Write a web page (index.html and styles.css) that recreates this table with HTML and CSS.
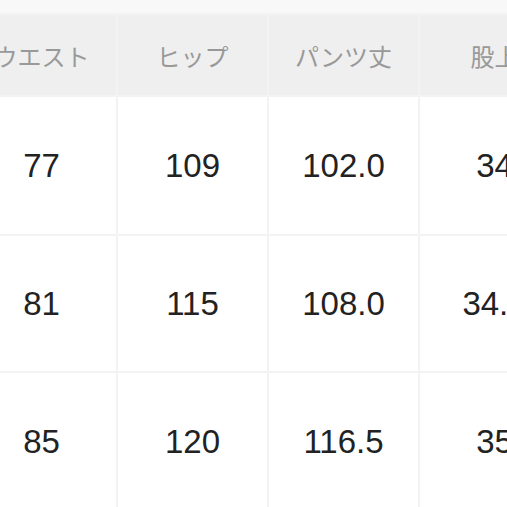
FILE: index.html
```html
<!DOCTYPE html>
<html lang="ja">
<head>
<meta charset="utf-8">
<link rel="stylesheet" href="styles.css">
</head>
<body>
<div class="wrap">
<table class="size">
<thead>
<tr><th>ウエスト</th><th>ヒップ</th><th>パンツ丈</th><th>股上</th></tr>
</thead>
<tbody>
<tr class="r1"><td>77</td><td>109</td><td>102.0</td><td>34</td></tr>
<tr class="r2"><td>81</td><td>115</td><td>108.0</td><td>34.5</td></tr>
<tr class="r3"><td>85</td><td>120</td><td>116.5</td><td>35</td></tr>
</tbody>
</table>
</div>
</body>
</html>
```
FILE: styles.css
```css
html, body {
  margin: 0;
  padding: 0;
  background: #f8f8f8;
  overflow: hidden;
}
.wrap {
  width: 507px;
  height: 507px;
  overflow: hidden;
  padding-top: 13px;
  box-sizing: border-box;
}
.size {
  width: 604px;
  border-collapse: collapse;
  table-layout: fixed;
  margin-left: -35px;
  font-family: "Noto Sans CJK JP", "Noto Sans", sans-serif;
}
.size th, .size td {
  width: 149px;
  border: 2px solid #f3f3f3;
  text-align: center;
  vertical-align: middle;
  padding: 0;
  white-space: nowrap;
}
.size th {
  height: 80px;
  background: #efefef;
  color: #999999;
  font-size: 24px;
  font-weight: 400;
}
.size td {
  height: 137px;
  background: #ffffff;
  color: #222;
  font-family: "Liberation Sans", Arial, sans-serif;
  font-size: 33px;
}
.size .r2 td {
  height: 135px;
}
```
